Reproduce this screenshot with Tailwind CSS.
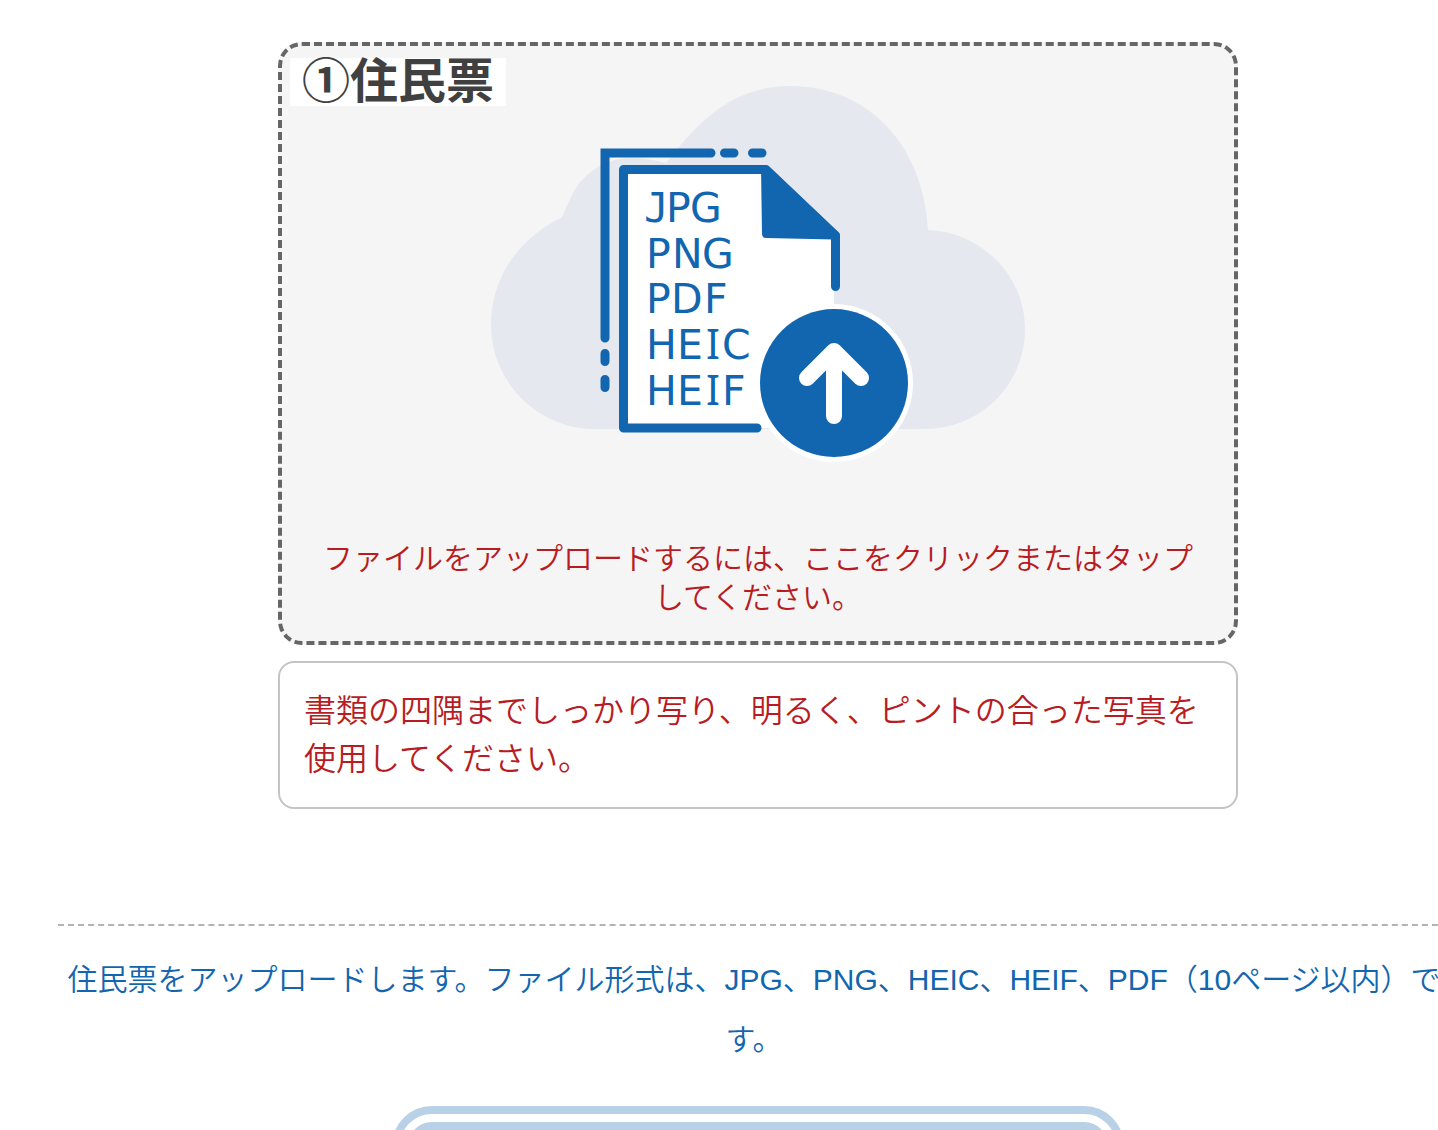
<!DOCTYPE html>
<html lang="ja">
  <head>
    <meta charset="UTF-8" />
    <meta name="viewport" content="width=device-width, initial-scale=1.0" />
    <title>住民票</title>
    <script src="https://cdn.jsdelivr.net/npm/@tailwindcss/browser@4"></script>
  </head>
  <body
    class="h-screen overflow-hidden bg-white font-['Liberation_Sans','Noto_Sans_CJK_JP',sans-serif]"
  >
    <main class="ml-[58px] -mr-5 pt-[42px]">
      <section class="mx-auto w-full max-w-[960px]">
        <!-- Upload area -->
        <label
          for="document"
          class="relative flex cursor-pointer flex-col items-center rounded-3xl border-4 border-dashed border-[#666] bg-[#f5f5f5] px-8 pt-[34px] pb-6"
        >
          <span
            class="absolute top-3 left-2 bg-white px-3 text-5xl leading-none font-bold text-[#404040]"
            >①住民票</span
          >
          <svg
            class="h-auto w-full max-w-[536px]"
            viewBox="490 80 536 390"
            fill="none"
            aria-hidden="true"
          >
            <!-- cloud -->
            <path
              fill="#e5e8ef"
              d="M595 429C538 429 491 382 491 325C491 276 520 238 562 217C567 207 572 191 582 180C596 165 614 158 631 158C643 158 655 160 666 163C690 133 725 86 790 86C868 86 924 145 928 230C981 232 1025 275 1025 329C1025 384 981 429 925 429Z"
            />
            <!-- back sheet -->
            <g stroke="#1266af" stroke-width="9" stroke-linecap="round">
              <path d="M605 338V153H711M724.500 153H734M752.500 153H762" />
              <path d="M605 353.500V361.500M605 379.500V387.500" />
            </g>
            <!-- front sheet -->
            <path fill="#fff" d="M623 169H764L834 237V428H623Z" />
            <path
              stroke="#1266af"
              stroke-width="9"
              stroke-linecap="round"
              stroke-linejoin="round"
              d="M757 428H623.500V169.500H766L835.500 235.500V286.500"
            />
            <path
              fill="#1266af"
              d="M761 168L768 166L840 234L834 239.500L766 238Q762 238 762 234Z"
            />
            <g
              fill="#1266af"
              font-family="'DejaVu Sans', sans-serif"
              font-size="41"
            >
              <text x="644 666 690" y="222"><tspan font-family="DejaVu Sans Mono">J</tspan>PG</text>
              <text x="646 672 702" y="268">PNG</text>
              <text x="646 671 704" y="313">PDF</text>
              <text x="646 677 706 722" y="359">HE<tspan font-family="Noto Sans">I</tspan>C</text>
              <text x="646 677 706 722" y="405">HE<tspan font-family="Noto Sans">I</tspan>F</text>
            </g>
            <!-- arrow badge -->
            <circle cx="834" cy="383" r="79" fill="#fff" />
            <circle cx="834" cy="383" r="74" fill="#1266af" />
            <path
              stroke="#fff"
              stroke-width="16"
              stroke-linecap="round"
              stroke-linejoin="round"
              d="M807 378L834 351L861 378M834 353V416"
            />
          </svg>
          <span
            class="mt-[69px] text-center text-[30px] leading-[39px] font-[350] text-[#b81c22]"
            >ファイルをアップロードするには、ここをクリックまたはタップしてください。</span
          >
          <input id="document" name="document" type="file" class="sr-only" />
        </label>

        <p
          class="mt-4 rounded-2xl border-2 border-[#c4c4c4] p-6 text-[32px] leading-[48px] font-[350] text-[#b81c22]"
        >
          書類の四隅までしっかり写り、明るく、ピントの合った写真を使用してください。
        </p>
      </section>

      <hr class="mt-[115px] border-t-2 border-dashed border-[#b3b3b3]" />

      <p
        class="mt-6 pr-3 pl-1 text-center text-[30px] leading-[60px] font-[350] text-[#1266af]"
      >
        住民票をアップロードします。ファイル形式は、JPG、PNG、HEIC、HEIF、PDF（10ページ以内）です。
      </p>

      <button
        type="button"
        disabled
        class="mx-auto mt-9 block w-full max-w-[732px] rounded-[40px] border-8 border-[#b8d1e7] p-2"
      >
        <span class="block h-16 rounded-3xl bg-[#b8d1e7]"></span>
      </button>
    </main>
  </body>
</html>
